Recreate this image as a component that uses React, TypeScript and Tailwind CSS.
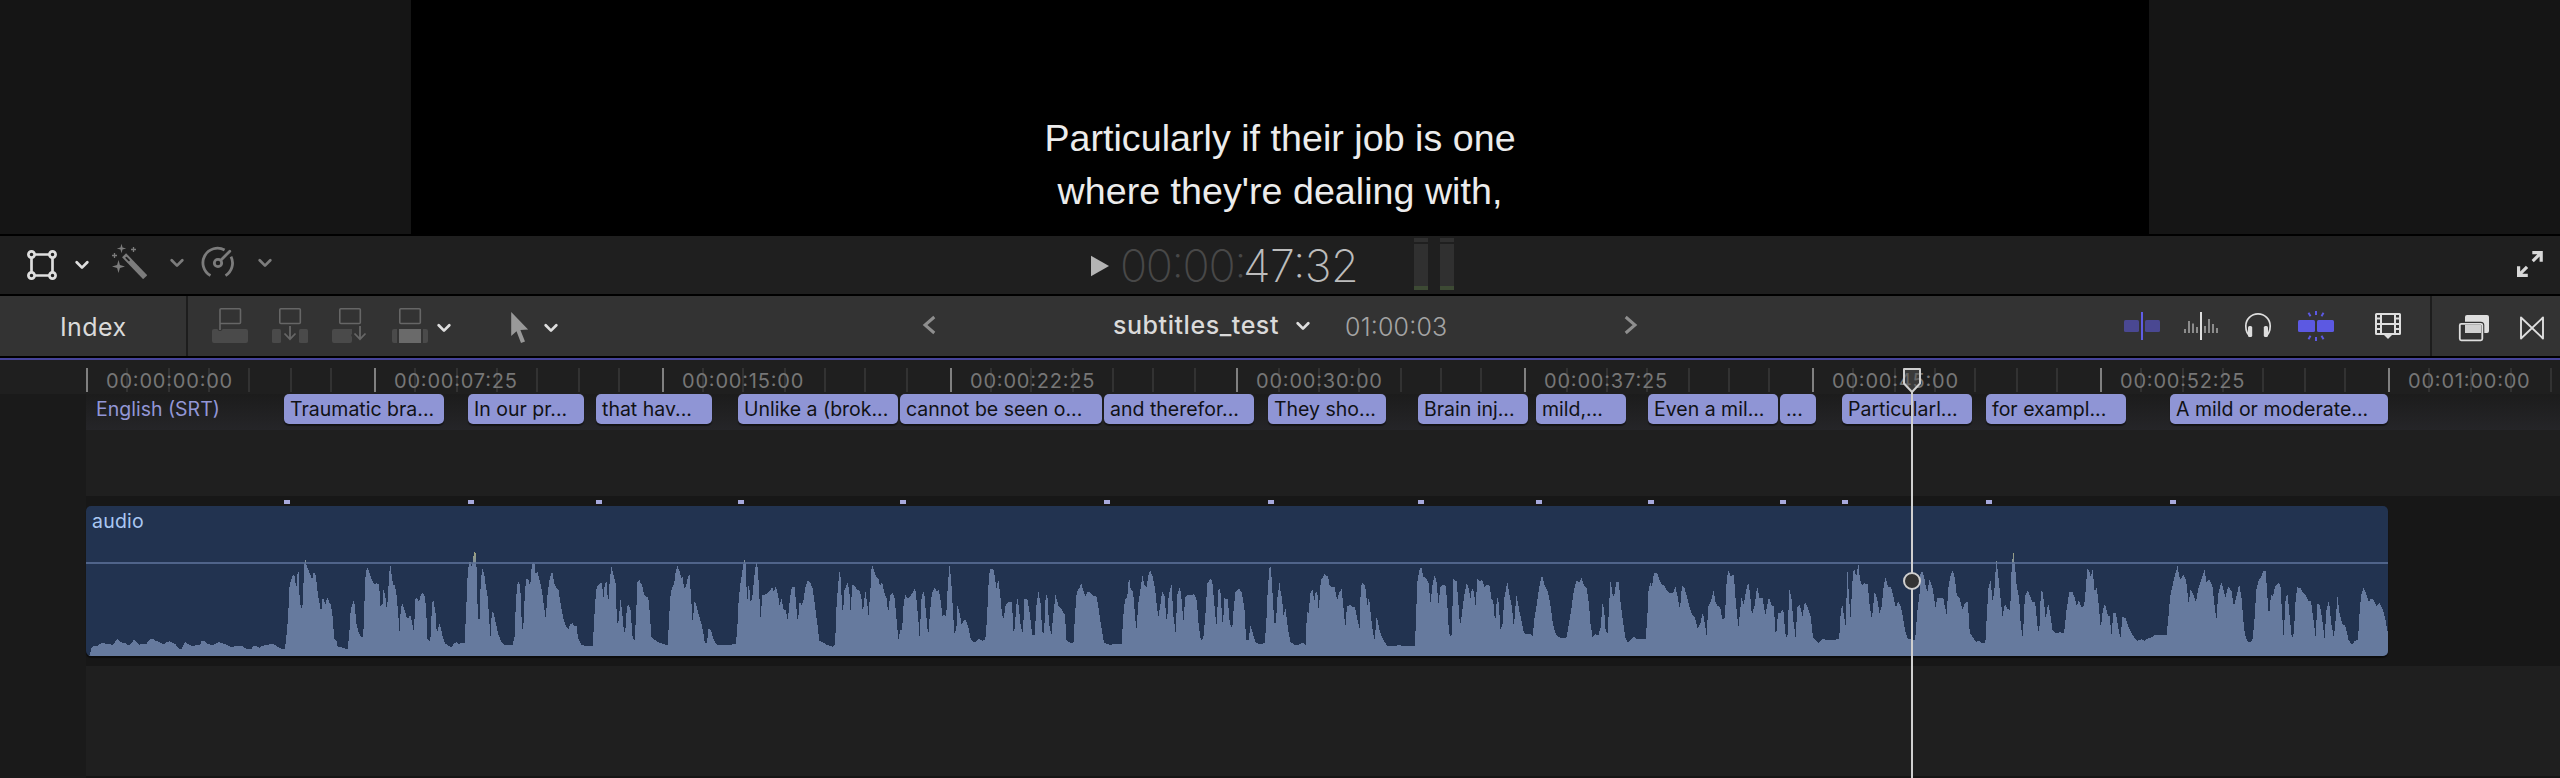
import React from "react";

type Caption = { start: number; end: number; text: string };

const LANE_START = 86;

const captions: Caption[] = [
  { start: 284, end: 444, text: "Traumatic bra..." },
  { start: 468, end: 584, text: "In our pr..." },
  { start: 596, end: 712, text: "that hav..." },
  { start: 738, end: 898, text: "Unlike a (brok..." },
  { start: 900, end: 1102, text: "cannot be seen o..." },
  { start: 1104, end: 1254, text: "and therefor..." },
  { start: 1268, end: 1386, text: "They sho..." },
  { start: 1418, end: 1528, text: "Brain inj..." },
  { start: 1536, end: 1626, text: "mild,..." },
  { start: 1648, end: 1778, text: "Even a mil..." },
  { start: 1780, end: 1816, text: "..." },
  { start: 1842, end: 1972, text: "Particularl..." },
  { start: 1986, end: 2126, text: "for exampl..." },
  { start: 2170, end: 2388, text: "A mild or moderate..." },
];

const ruler = [
  { label: "00:00:00:00", width: 288, minor: [40, 82, 122, 162, 204, 244] },
  { label: "00:00:07:25", width: 288, minor: [40, 82, 122, 162, 204, 244] },
  { label: "00:00:15:00", width: 288, minor: [40, 80, 122, 162, 202, 244] },
  { label: "00:00:22:25", width: 286, minor: [40, 80, 122, 162, 202, 244] },
  { label: "00:00:30:00", width: 288, minor: [42, 82, 122, 164, 204, 244] },
  { label: "00:00:37:25", width: 288, minor: [42, 82, 122, 164, 204, 244] },
  { label: "00:00:45:00", width: 288, minor: [40, 82, 122, 162, 204, 244] },
  { label: "00:00:52:25", width: 288, minor: [40, 82, 122, 162, 204, 244] },
  { label: "00:01:00:00", width: 172, minor: [40, 82, 122, 162] },
];

/* Peak envelopes, one per 640px section of the clip. */
const waveform = [
  "213,918 220,915 224,895 228,890 232,887 238,889 244,881 250,880 256,880 262,883 270,882 276,885 280,880 284,870 287,867 290,870 294,875 300,878 306,878 312,884 318,886 324,876 329,868 334,876 342,884 350,882 358,882 364,874 370,867 376,867 380,874 386,874 392,878 398,882 404,882 410,875 416,874 422,878 430,882 434,890 438,896 446,896 450,884 454,877 460,882 470,888 480,886 490,886 494,873 502,874 508,881 516,884 524,884 534,877 542,878 550,882 560,887 568,892 578,887 592,887 598,893 606,897 616,896 622,887 630,889 636,893 642,888 656,884 668,882 676,885 682,892 690,896 698,896 702,855 706,800 709,712 713,690 718,673 722,680 726,715 729,670 731,657 734,740 737,775 741,770 744,690 747,618 750,640 754,655 758,668 762,680 765,690 768,670 772,668 775,690 779,735 783,760 787,788 790,748 793,746 797,765 800,750 803,744 807,757 811,765 815,800 819,868 824,872 828,892 836,890 840,895 852,896 856,850 858,795 862,766 866,754 869,765 873,820 878,846 884,860 889,860 892,820 894,695 897,665 900,652 904,665 908,680 913,695 918,702 924,700 929,705 932,767 937,765 940,715 944,740 948,782 951,730 953,680 956,642 960,680 963,705 968,707 972,740 976,800 979,845 982,775 986,760 990,775 996,800 1000,805 1005,795 1009,812 1013,842 1016,800 1018,746 1022,745 1027,755 1031,735 1036,729 1041,740 1044,775 1047,865 1052,875 1056,855 1058,760 1062,752 1067,790 1070,848 1073,842 1076,820 1080,835 1085,862 1090,880 1098,887 1106,892 1112,880 1118,877 1124,882 1130,878 1138,880 1142,790 1145,690 1149,638 1152,634 1156,650 1160,620 1164,600 1167,630 1170,765 1174,838 1178,690 1182,655 1186,670 1190,705 1195,742 1198,800 1202,863 1205,785 1209,788 1214,815 1220,850 1228,875 1236,884 1256,884 1261,860 1264,750 1268,700 1272,695 1275,720 1279,840 1282,834 1286,730 1289,685 1294,688 1299,707 1303,645 1309,636 1312,670 1317,665 1322,690 1328,725 1333,770 1337,806 1341,740 1346,690 1353,663 1358,700 1362,712 1368,718 1374,765 1380,805 1386,828 1392,838 1398,822 1403,820 1407,830 1412,825 1416,862 1424,884 1434,888 1452,888 1455,830 1458,760 1462,712 1467,705 1471,698 1475,698 1478,750 1482,700 1486,697 1490,762 1494,690 1498,649 1502,668 1508,700 1512,822 1516,810 1520,748 1524,780 1529,852 1533,830 1536,770 1540,765 1545,780 1550,865 1555,872 1559,780 1562,695 1568,690 1568,918",
  "0,918 0,700 5,702 10,735 16,742 20,740 24,790 28,860 36,870 44,876 56,882 68,886 71,810 74,745 78,715 84,700 88,660 92,649 97,665 101,685 104,680 108,715 112,712 116,690 121,668 125,740 129,816 134,750 138,765 143,790 149,815 154,840 159,880 164,878 168,835 174,842 180,868 188,884 200,886 216,884 234,883 238,845 241,765 245,710 250,670 254,640 258,622 260,690 263,755 267,690 270,755 275,745 280,680 284,640 287,636 291,700 295,805 300,735 308,733 316,725 324,712 328,725 333,709 338,735 342,765 347,745 351,775 357,782 362,810 368,740 372,712 379,712 384,785 387,818 391,755 396,765 400,755 405,712 411,690 417,698 423,715 428,760 432,800 436,835 439,872 450,878 458,885 466,888 472,890 478,885 481,780 485,710 490,652 494,740 497,795 501,720 509,698 513,725 516,785 520,705 527,707 532,720 538,722 542,740 546,788 552,722 556,755 560,795 564,730 568,640 573,660 578,680 584,685 588,710 593,695 599,730 604,745 608,790 613,735 619,730 624,745 628,800 633,868 638,840 642,842 646,760 650,735 656,745 661,742 668,728 674,712 678,755 682,810 685,862 690,740 696,722 700,780 706,858 711,780 715,730 722,712 727,725 732,718 737,755 741,797 746,795 750,800 754,710 758,645 762,685 766,765 770,850 775,840 778,765 784,795 788,825 792,815 798,808 804,830 809,860 813,874 822,876 830,866 838,872 846,870 850,810 854,700 857,658 866,658 870,685 873,715 878,690 883,740 887,795 891,805 896,765 903,755 911,755 916,860 920,800 924,740 928,770 933,830 938,850 942,748 949,748 955,790 961,855 967,855 971,770 976,725 982,765 985,845 990,850 994,735 998,735 1002,820 1008,855 1012,800 1018,735 1026,770 1034,780 1041,795 1045,870 1053,878 1062,878 1066,790 1070,728 1076,715 1081,700 1086,722 1091,738 1096,726 1104,728 1112,738 1119,740 1124,780 1130,830 1137,878 1150,884 1180,882 1184,800 1188,750 1194,740 1198,677 1202,715 1208,725 1213,800 1216,842 1221,760 1226,720 1231,677 1236,705 1241,710 1245,680 1250,660 1256,680 1262,715 1266,765 1270,800 1275,765 1279,725 1285,738 1291,820 1295,740 1302,700 1307,800 1312,845 1317,730 1323,712 1328,760 1331,820 1336,740 1342,735 1350,735 1358,733 1364,750 1369,830 1374,870 1380,865 1385,800 1390,700 1398,686 1402,695 1406,745 1412,830 1418,708 1422,725 1428,830 1432,745 1440,748 1445,820 1451,835 1455,770 1459,725 1468,716 1475,730 1481,780 1485,870 1491,870 1496,825 1500,845 1508,876 1516,882 1530,880 1534,830 1538,720 1543,643 1546,655 1550,735 1554,820 1558,820 1562,740 1568,690 1568,918",
  "0,918 0,715 5,745 9,800 13,772 16,800 20,840 26,876 36,885 46,884 56,878 63,885 66,785 70,790 75,725 80,720 84,755 88,722 92,735 95,785 100,690 105,682 109,672 114,678 118,680 121,705 128,712 134,712 140,750 146,725 151,718 156,780 160,835 164,768 172,765 178,772 184,772 190,812 195,835 198,710 203,698 209,710 214,768 218,740 223,800 228,850 232,868 237,798 243,835 248,858 256,875 262,888 272,889 285,887 292,883 298,888 330,888 333,820 336,700 341,662 346,649 351,682 358,683 364,700 369,760 374,700 379,675 384,700 388,762 393,712 399,705 406,707 410,765 414,850 420,862 425,686 433,695 437,760 441,828 446,790 451,740 458,697 463,720 467,745 470,715 475,725 479,765 484,685 490,695 495,690 501,710 508,705 514,708 519,755 522,745 527,820 532,738 536,760 540,838 545,825 550,740 557,697 563,740 568,770 573,832 579,735 586,780 592,815 598,850 606,852 612,852 619,858 624,800 630,755 636,705 642,675 648,705 656,725 662,760 668,815 674,848 682,862 694,864 702,862 708,820 714,775 720,720 726,692 733,697 739,682 744,705 751,715 757,760 761,825 766,862 772,852 780,857 786,830 790,762 794,775 798,845 803,850 806,770 810,692 815,735 819,738 824,695 830,695 835,765 840,810 846,862 852,877 860,868 868,860 874,868 896,868 900,800 903,720 907,697 911,712 916,670 924,670 930,690 936,705 942,707 948,722 955,730 962,730 969,712 974,740 980,778 985,705 991,715 998,745 1004,775 1010,795 1016,800 1023,835 1030,820 1036,787 1040,815 1045,855 1050,765 1056,755 1062,722 1067,755 1072,768 1078,770 1084,808 1090,805 1094,700 1098,660 1104,678 1112,675 1117,760 1123,832 1128,775 1131,742 1136,765 1141,730 1147,695 1152,735 1156,795 1163,765 1169,710 1175,745 1182,742 1189,795 1194,765 1198,742 1204,765 1210,770 1215,865 1220,790 1226,788 1233,778 1238,850 1243,868 1248,718 1253,745 1258,815 1263,860 1268,770 1274,765 1280,800 1286,755 1292,768 1300,800 1306,862 1313,870 1320,880 1330,866 1340,870 1356,870 1370,866 1373,800 1377,760 1382,800 1386,830 1390,658 1394,740 1398,805 1402,700 1406,652 1412,680 1417,640 1421,690 1426,705 1432,700 1440,702 1444,760 1450,808 1457,725 1463,745 1469,790 1474,770 1478,720 1483,682 1490,710 1497,710 1503,740 1509,775 1514,755 1520,765 1526,800 1532,845 1538,865 1548,868 1556,872 1561,790 1568,720 1568,918",
  "0,918 0,678 5,660 10,680 14,710 18,725 23,688 30,710 34,740 38,770 42,745 50,745 57,742 61,770 65,792 70,710 76,670 81,662 86,690 90,735 97,745 104,777 110,760 117,755 122,850 130,862 137,876 144,872 152,880 160,880 164,790 168,710 173,692 178,755 182,725 187,628 192,680 197,740 202,800 208,762 213,775 221,780 225,640 229,608 233,650 237,710 243,745 247,830 252,863 257,740 264,722 270,740 275,755 282,755 288,830 292,852 296,730 299,716 304,760 308,808 314,758 320,800 325,842 335,850 343,847 353,850 359,780 366,725 373,725 378,740 384,768 389,750 395,770 400,770 404,750 410,656 414,660 418,680 423,660 428,725 433,712 438,765 443,836 448,780 453,760 460,795 465,800 469,855 474,790 480,790 486,835 491,865 496,800 504,805 510,830 518,848 526,865 532,873 542,868 550,872 560,864 568,862 575,855 604,856 608,810 613,740 620,700 626,670 631,648 637,690 645,675 652,690 658,758 663,718 670,735 676,758 682,715 690,685 697,660 702,695 708,688 716,705 722,770 726,810 731,730 738,697 743,715 748,745 755,710 763,722 769,770 775,740 782,703 788,745 792,810 796,855 802,872 808,878 815,868 820,800 824,720 830,690 836,682 841,662 847,662 850,720 855,800 860,735 865,738 870,708 878,700 883,705 887,790 891,862 896,740 901,735 905,790 911,865 916,850 920,755 924,712 932,714 938,728 945,735 952,752 958,755 963,800 969,858 974,760 980,765 986,815 991,865 996,780 1002,752 1007,815 1014,865 1019,800 1023,740 1028,790 1034,820 1042,828 1050,870 1058,884 1066,872 1073,870 1078,770 1082,730 1087,714 1093,730 1100,757 1105,745 1111,750 1118,768 1126,760 1133,775 1140,805 1144,835 1147,850 1147,918",
];

function Chevron({ className }: { className: string }) {
  return (
    <svg viewBox="0 0 14 10" className={"h-[10px] w-[14px] shrink-0 " + className} fill="none" stroke="currentColor" strokeWidth="2.7" strokeLinecap="round" strokeLinejoin="round">
      <path d="M1.7 2.2 7 7.6 12.3 2.2" />
    </svg>
  );
}

function Viewer() {
  return (
    <section className="flex h-[236px] border-b-2 border-black bg-[#151515] pl-[411px] pr-[411px]">
      <div className="flex w-full flex-col items-center bg-black pt-[112px] font-['Liberation_Sans',Arial,sans-serif] text-[37.6px] leading-[53.4px] tracking-[0.04px] text-[#ececec]">
        <p className="whitespace-nowrap">Particularly if their job is one</p>
        <p className="whitespace-nowrap">where they're dealing with,</p>
      </div>
    </section>
  );
}

function Meter() {
  return (
    <div className="flex h-[52px] w-[14px] flex-col">
      <div className="h-1 bg-[#303030]" />
      <div className="mt-0.5 h-[42px] bg-[#303030]" />
      <div className="h-1 bg-[#3d4a34]" />
    </div>
  );
}

function TransportBar() {
  return (
    <section className="flex h-[60px] items-center border-b-2 border-black bg-[#1f1f1f]">
      <div className="flex w-[1091px] items-center pl-[26px]">
        <svg viewBox="26 249 32 32" className="h-8 w-8 shrink-0" fill="none" stroke="#dedede" strokeWidth="2.7">
          <path d="M35 254.5h14M35 275.5h14M31.5 258v14M52.5 258v14" />
          <circle cx="31.5" cy="254.5" r="3.1" />
          <circle cx="52.5" cy="254.5" r="3.1" />
          <circle cx="31.5" cy="275.5" r="3.1" />
          <circle cx="52.5" cy="275.5" r="3.1" />
        </svg>
        <Chevron className="ml-[17px] text-[#dedede]" />
        <svg viewBox="111 243 36 36" className="-mt-2 ml-[22px] h-9 w-9 shrink-0" fill="#7c7c7c">
          <path d="M126 257.3 143.2 275.2" stroke="#7c7c7c" strokeWidth="5.6" strokeLinecap="square" />
          <path d="M126.3 257.6 129 260.4" stroke="#1f1f1f" strokeWidth="1.8" strokeLinecap="round" />
          <path d="M121.5 243.8l1 3.7 3.7 1-3.7 1-1 3.7-1-3.7-3.7-1 3.7-1zM118.5 260l1.4 5.1 5.1 1.4-5.1 1.4-1.4 5.1-1.4-5.1-5.1-1.4 5.1-1.4z" />
          <path d="M133.5 247v5M131 249.5h5M114.5 253v5M112 255.5h5" stroke="#7c7c7c" strokeWidth="1.3" />
        </svg>
        <Chevron className="-mt-1 ml-[23px] text-[#7c7c7c]" />
        <svg viewBox="201 246 34 34" className="-mt-1 ml-[17px] h-[34px] w-[34px] shrink-0" fill="none" stroke="#7c7c7c" strokeWidth="2.8">
          <path d="M210.5 275.6A14.6 14.6 0 0 1 224.6 250M231 256.6A14.6 14.6 0 0 1 225.5 275.6" />
          <circle cx="218" cy="263" r="3.7" />
          <path d="M220.8 260.2 229.8 251.2" strokeLinecap="round" />
        </svg>
        <Chevron className="-mt-1 ml-[23px] text-[#7c7c7c]" />
      </div>
      <svg viewBox="0 0 18 22" className="mt-0.5 h-[22px] w-[18px] shrink-0" fill="#b4b4b4">
        <path d="M0 .7v20.6L18 11z" />
      </svg>
      <div className="ml-[11px] flex w-[294px] whitespace-nowrap font-[Inter,sans-serif] text-[45px] font-extralight leading-none [font-feature-settings:'case']">
        <span className="w-[123px] tracking-[-1.4px] text-[#484848]">00:00:</span>
        <span className="tracking-[-0.5px] text-[#bcbcbc]">47:32</span>
      </div>
      <div className="-mt-0.5 flex gap-3">
        <Meter />
        <Meter />
      </div>
      <svg viewBox="2516 250 28 28" className="ml-auto mr-4 mt-[-2px] h-7 w-7 shrink-0" fill="#d8d8d8">
        <path d="M2532.3 251h10.5v10.8h-3.2v-5.2l-5.8 5.6-2.2-2.2 5.7-5.7h-5zM2517 266.3h3.2v5.1l5.7-5.6 2.3 2.3-5.8 5.6h5.4v3.3H2517z" />
      </svg>
    </section>
  );
}

function EditTools() {
  return (
    <svg viewBox="210 308 220 40" className="ml-[22px] h-10 w-[220px] shrink-0">
      <g fill="none" stroke="#666" strokeWidth="1.6">
        <path d="M220 332v-20.2a1 1 0 0 1 1-1h18.5a1 1 0 0 1 1 1v12.7a1 1 0 0 1-1 1H220" />
        <rect x="279.8" y="310.8" width="20.5" height="14.7" rx="1" />
        <rect x="339.8" y="310.8" width="20.5" height="14.7" rx="1" />
        <rect x="399.8" y="310.8" width="20.5" height="14.7" rx="1" />
        <path d="M290 328v13M284.5 335.5l5.5 5.7 5.5-5.7M360 328v13M354.5 335.5l5.5 5.7 5.5-5.7" strokeWidth="1.8" />
      </g>
      <g fill="#4a4a4a">
        <path d="M214 331h3.5c.5 1.5 1.200 2 2.500 2s2-.5 2.500-2H246a2 2 0 0 1 2 2v10a2 2 0 0 1-2 2h-32a2 2 0 0 1-2-2v-10a2 2 0 0 1 2-2z" />
        <rect x="272" y="331" width="9" height="14" rx="1.5" />
        <rect x="299" y="331" width="9" height="14" rx="1.5" />
        <path d="M334 331h18v5l-1 1 1 2v4a2 2 0 0 1-2 2h-16a2 2 0 0 1-2-2v-10a2 2 0 0 1 2-2z" />
        <path d="M397 331v14h-3a2 2 0 0 1-2-2v-10a2 2 0 0 1 2-2zM423 331v14h3a2 2 0 0 0 2-2v-10a2 2 0 0 0-2-2z" />
      </g>
      <path d="M399 331h22v14h-22z" fill="#6a6a6a" />
    </svg>
  );
}

function ViewToggles() {
  return (
    <svg viewBox="2122 308 282 40" className="h-10 w-[282px] shrink-0">
      <g fill="#4a4892">
        <rect x="2124" y="322" width="15" height="12" rx="1.5" />
        <rect x="2145" y="322" width="15" height="12" rx="1.5" />
      </g>
      <path d="M2141 314h2v28h-2z" fill="#605de6" />
      <path d="M2184 331h2v4h-2zM2188 323h2v12h-2zM2192 325.5h2v9.5h-2zM2196 329h2v6h-2zM2204 328h2v7h-2zM2208 321h2v14h-2zM2212 326h2v9h-2zM2216 330h2v5h-2z" fill="#8c8c8c" />
      <path d="M2200 314h2v28h-2z" fill="#dedede" />
      <path d="M2250.5 338.5C2247 336 2245.8 332 2245.8 328a12.2 12.2 0 0 1 24.4 0c0 4-1.200 8-4.700 10.500" fill="none" stroke="#dedede" strokeWidth="1.7" />
      <rect x="2248" y="328" width="4.2" height="11" rx="1.6" fill="#dedede" />
      <rect x="2263.8" y="328" width="4.2" height="11" rx="1.6" fill="#dedede" />
      <g fill="#5c59e2">
        <rect x="2298" y="322" width="17" height="12" rx="1.5" />
        <rect x="2317" y="322" width="17" height="12" rx="1.5" />
      </g>
      <path d="M2316 313v4M2308.5 314.800l2 3.400M2323.500 314.800l-2 3.400M2316 339v4M2308.500 341.200l2-3.400M2323.500 341.200l-2-3.400" stroke="#5c59e2" strokeWidth="2" />
      <path fillRule="evenodd" fill="#dedede" d="M2376.5 315h23a1.500 1.500 0 0 1 1.500 1.500v19a1.500 1.500 0 0 1-1.500 1.500h-7.500l-4 4-4-4h-7.500a1.500 1.500 0 0 1-1.500-1.500v-19a1.500 1.500 0 0 1 1.500-1.500zM2382 317v8h12v-8zM2382 327v8h12v-8zM2377 317v2.500h3V317zM2377 321.500v3.500h3v-3.500zM2377 327v3h3v-3zM2377 332v3h3v-3zM2396 317v2.500h3V317zM2396 321.500v3.500h3v-3.500zM2396 327v3h3v-3zM2396 332v3h3v-3z" />
    </svg>
  );
}

function Toolbar() {
  return (
    <section className="flex h-[62px] items-center border-b-2 border-black bg-[#333] font-[Inter,sans-serif] text-[25px] text-[#dadada]">
      <div className="flex h-full w-[188px] items-center border-r-2 border-[#1d1d1d] pl-[60px] pt-[3px] tracking-[0.4px]">Index</div>
      <EditTools />
      <Chevron className="ml-[7px] mt-[4px] text-[#dedede]" />
      <svg viewBox="510 311 20 34" className="ml-[59px] mt-1 h-[34px] w-5 shrink-0" fill="#999">
        <path d="M511.2 312v24l5.300-4.700 4.500 11.700 4-1.600-4.600-11.300 7.700-.6z" />
      </svg>
      <Chevron className="ml-[14px] mt-[4px] text-[#dedede]" />
      <div className="ml-[364px] flex flex-1 items-center">
        <svg viewBox="0 0 14 20" className="-mt-0.5 h-5 w-[14px] shrink-0" fill="none" stroke="#8e8e8e" strokeWidth="3">
          <path d="M12.3 2 3 10l9.300 8" />
        </svg>
        <span className="-mt-px ml-[177px] w-[183px] whitespace-nowrap font-medium leading-none tracking-[0.55px]">subtitles_test</span>
        <Chevron className="text-[#dedede]" />
        <span className="ml-[35px] mt-[3px] w-[279px] whitespace-nowrap font-light leading-none tracking-[0.2px] text-[#a4a4a4] [font-feature-settings:'case']">01:00:03</span>
        <svg viewBox="0 0 14 20" className="-mt-0.5 h-5 w-[14px] shrink-0" fill="none" stroke="#8e8e8e" strokeWidth="3">
          <path d="M1.7 2 11 10l-9.300 8" />
        </svg>
      </div>
      <ViewToggles />
      <div className="ml-[26px] flex h-full w-[130px] items-center border-l-2 border-[#1d1d1d] pl-[25px]">
        <svg viewBox="2457 310 92 36" className="mt-1 h-9 w-[92px] shrink-0" fill="none" stroke="#dedede">
          <rect x="2465" y="315" width="24" height="18" rx="2" fill="#dedede" stroke="none" />
          <rect x="2459.8" y="323.8" width="22.5" height="16.5" rx="1.5" stroke="#333" strokeWidth="4" />
          <rect x="2465" y="325" width="16" height="8" fill="#d0d0d0" stroke="none" />
          <rect x="2459.8" y="323.8" width="22.5" height="16.5" rx="1.5" strokeWidth="1.8" />
          <path d="M2521 317.5v21l22-21v21z" strokeWidth="1.9" strokeLinejoin="round" />
        </svg>
      </div>
    </section>
  );
}

function Ruler() {
  return (
    <div className="flex h-[34px] overflow-hidden pl-[86px] pt-2">
      {ruler.map((seg) => (
        <div key={seg.label} className="relative h-6 shrink-0 border-l-2 border-[#808080]" style={{ width: seg.width }}>
          <svg className="h-6 w-full" fill="#323232">
            {seg.minor.map((m) => (
              <rect key={m} x={m - 2} y="0" width="2" height="24" />
            ))}
          </svg>
          <span className="absolute left-[18px] top-0 whitespace-nowrap text-[20px] leading-[26px] tracking-[0.8px] text-[#767676] [font-feature-settings:'case']">{seg.label}</span>
        </div>
      ))}
    </div>
  );
}

function CaptionLane() {
  return (
    <div className="flex h-9 bg-gradient-to-b from-[#1c1c1c] to-[#252528] text-[19.5px] leading-[30px]">
      <span className="w-0 whitespace-nowrap pl-[10px] text-[#9296d6]">English (SRT)</span>
      {captions.map((c, i) => {
        const previous = i === 0 ? LANE_START + 10 : captions[i - 1].end;
        return (
          <div
            key={c.start}
            className="h-[30px] shrink-0 whitespace-nowrap rounded-[5px] bg-[#8f95d5] pl-1.5 text-[#111216] shadow-[0_2px_1px_rgba(0,0,0,0.45)]"
            style={{ marginLeft: c.start - previous, width: c.end - c.start }}
          >
            {c.text}
          </div>
        );
      })}
    </div>
  );
}

function MarkerRow() {
  return (
    <div className="flex h-[10px] pt-1">
      {captions.map((c, i) => (
        <div
          key={c.start}
          className="h-1 w-1.5 shrink-0 bg-[#a7a9dc]"
          style={{ marginLeft: i === 0 ? c.start - LANE_START : c.start - captions[i - 1].start - 6 }}
        />
      ))}
    </div>
  );
}

function AudioClip() {
  return (
    <div className="relative h-[150px] w-[2302px] overflow-hidden rounded-[5px] bg-[#223350] shadow-[0_2px_1px_rgba(0,0,0,0.5)]">
      <svg viewBox="86 506 2302 150" className="absolute inset-0 h-full w-full" shapeRendering="crispEdges">
        <defs>
          <linearGradient id="peak" gradientUnits="userSpaceOnUse" x1="0" x2="0" y1="600" y2="650">
            <stop offset="0" stopColor="#a9a878" />
            <stop offset="0.7" stopColor="#7f8f98" />
            <stop offset="0.8" stopColor="#667a9e" />
          </linearGradient>
        </defs>
        <path d="M86 562h2302v2H86z" fill="#51648a" />
        {waveform.map((points, i) => (
          <g key={i} transform={`translate(${i * 640} 350) scale(0.40816 0.33333)`}>
            <polygon points={points} fill="url(#peak)" />
          </g>
        ))}
        <path d="M86 562h2302v2H86z" fill="#51648a" fillOpacity="0.4" />
      </svg>
      <span className="relative block pl-1.5 text-[19.5px] leading-[30px] tracking-[0.2px] text-[#a9c7f2]">audio</span>
    </div>
  );
}

function Playhead() {
  return (
    <svg viewBox="1900 366 24 412" className="absolute left-[1900px] top-[6px] h-[412px] w-6" fill="none" stroke="#cfcfcf" strokeWidth="2">
      <path d="M1904 369h16v14.5l-8 8.500-8-8.500z" fill="#55555580" strokeLinejoin="round" />
      <path d="M1912 392v386" />
      <circle cx="1912" cy="581" r="8" fill="#333" />
    </svg>
  );
}

function Timeline() {
  return (
    <section className="relative h-[420px] overflow-hidden border-t-2 border-[#45439a] bg-[#1f1f1f] font-[Inter,sans-serif]">
      <Ruler />
      <div className="flex">
        <div className="h-[384px] w-[86px] shrink-0 bg-[#1a1a1a]" />
        <div className="flex-1">
          <CaptionLane />
          <div className="h-[66px] bg-[#1f1f1f]" />
          <div className="h-[170px] bg-[#171717]">
            <MarkerRow />
            <AudioClip />
          </div>
          <div className="box-content h-[110px] border-b-2 border-[#151515] bg-[#1f1f1f]" />
        </div>
      </div>
      <Playhead />
    </section>
  );
}

export default function App() {
  return (
    <main className="h-[778px] w-[2560px] overflow-hidden bg-[#1f1f1f]">
      <Viewer />
      <TransportBar />
      <Toolbar />
      <Timeline />
    </main>
  );
}
